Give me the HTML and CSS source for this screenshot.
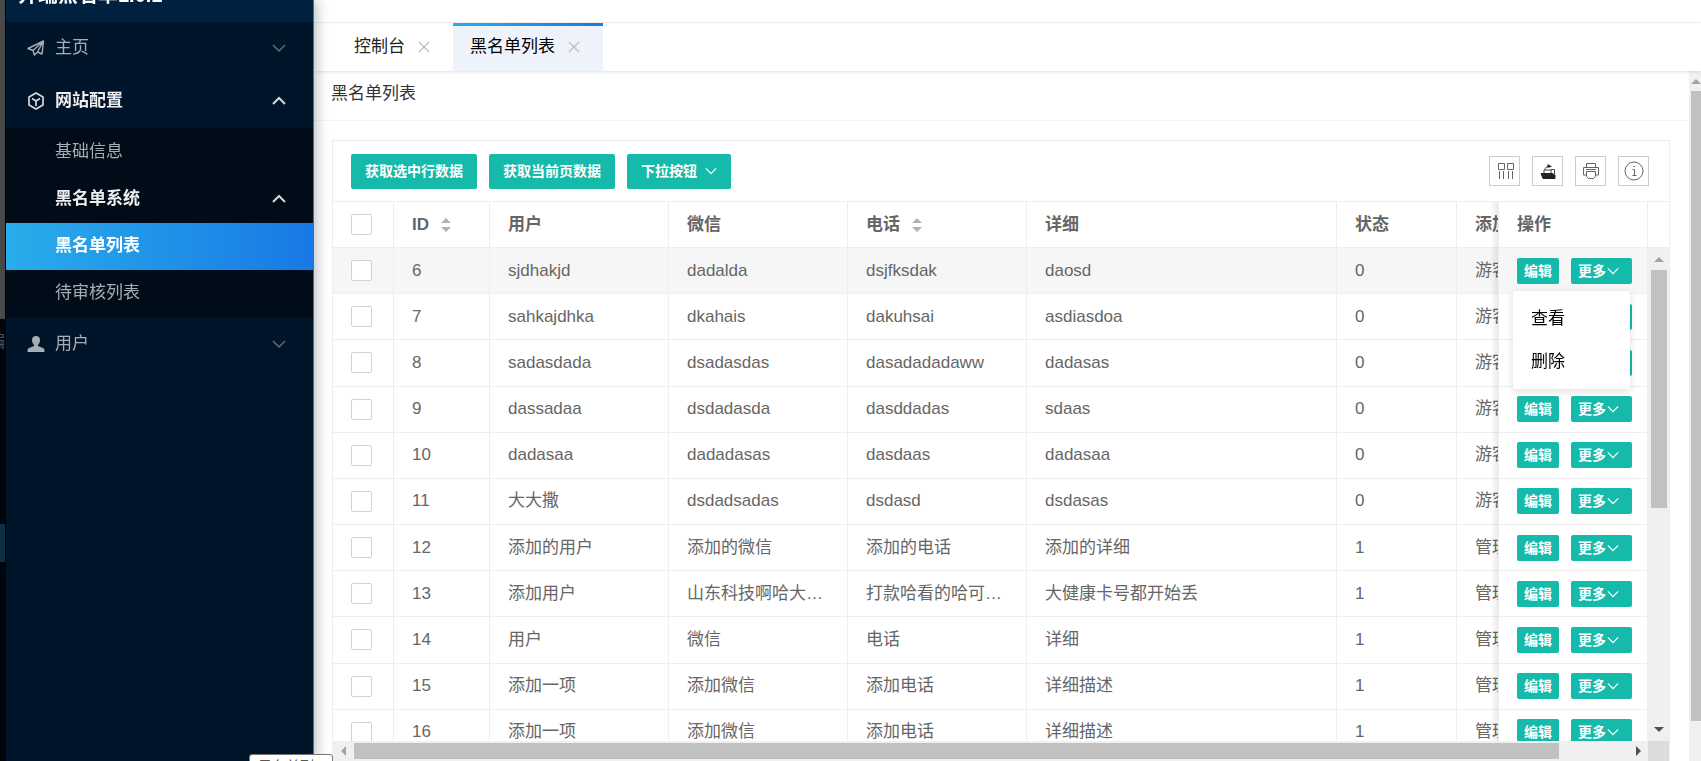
FILE: index.html
```html
<!DOCTYPE html>
<html lang="zh-CN">
<head>
<meta charset="utf-8">
<title>黑名单列表</title>
<link rel="stylesheet" href="styles.css">
</head>
<body>
<svg class="defs" aria-hidden="true">
  <symbol id="down" viewBox="0 0 14 14"><path d="M1 4l6 6 6-6" fill="none" stroke="currentColor" stroke-width="1.4"/></symbol>
  <symbol id="up" viewBox="0 0 14 14"><path d="M1 10l6-6 6 6" fill="none" stroke="currentColor" stroke-width="2"/></symbol>
  <symbol id="close" viewBox="0 0 12 12"><path d="M1 1l10 10M11 1L1 11" fill="none" stroke="currentColor" stroke-width="1.2"/></symbol>
  <symbol id="sort" viewBox="0 0 10 16"><path d="M0 6l5-5 5 5zM0 10h10l-5 5z" fill="currentColor"/></symbol>
</svg>
<div class="app">
  <div class="edge"><div class="edge-top"></div><div class="edge-text">编</div><div class="edge-mark"></div></div>
  <aside class="side">
    <div class="logo">并端黑名单1.0.1</div>
    <nav class="menu">
      <a class="item" href="#">
        <svg class="icon" viewBox="0 0 18 18"><path d="M1 9.500L16.500 2 15 15l-4.500-2L7.500 16 6 11.500zM6 11.500L16.500 2l-6 11" fill="none" stroke="currentColor" stroke-width="1.4" stroke-linejoin="round"/></svg>
        <span>主页</span><svg class="arrow"><use href="#down"/></svg>
      </a>
      <a class="item open" href="#">
        <svg class="icon" viewBox="0 0 18 18"><path d="M9 1l7 4v8l-7 4-7-4V5zM5 6.500l4 2.500 4-2.500M9 9v5" fill="none" stroke="currentColor" stroke-width="1.7" stroke-linejoin="round"/></svg>
        <span>网站配置</span><svg class="arrow"><use href="#up"/></svg>
      </a>
      <div class="sub">
        <a class="item" href="#"><span>基础信息</span></a>
        <a class="item open" href="#"><span>黑名单系统</span><svg class="arrow"><use href="#up"/></svg></a>
        <a class="item active" href="#"><span>黑名单列表</span></a>
        <a class="item" href="#"><span>待审核列表</span></a>
      </div>
      <a class="item" href="#">
        <svg class="icon" viewBox="0 0 18 18"><path d="M9 1c2.500 0 4 1.500 4 4 0 2-1 4-2 5v1l5 2c1 .5 1.500 1 1.500 4H.5c0-3 .5-3.500 1.500-4l5-2v-1C6 9 5 7 5 5c0-2.500 1.500-4 4-4z" fill="currentColor"/></svg>
        <span>用户</span><svg class="arrow"><use href="#down"/></svg>
      </a>
    </nav>
  </aside>
  <div class="main">
    <header class="top"></header>
    <div class="tabs">
      <div class="tab"><a href="#">控制台</a><button class="x" aria-label="关闭控制台"><svg><use href="#close"/></svg></button></div>
      <div class="tab current"><a href="#">黑名单列表</a><button class="x" aria-label="关闭黑名单列表"><svg><use href="#close"/></svg></button></div>
    </div>
    <div class="frame">
      <main class="content">
        <h1 class="title">黑名单列表</h1>
        <section class="card">
          <div class="toolbar">
            <button class="btn">获取选中行数据</button>
            <button class="btn">获取当前页数据</button>
            <button class="btn">下拉按钮<svg><use href="#down"/></svg></button>
            <div class="tools">
              <button class="tool" aria-label="筛选列"><svg viewBox="0 0 18 18"><path d="M2.500 1.500h6v6h-6zM11.500 1.500h6v6h-6zM3.500 9v8M7.500 9v8M12.500 9v8M16.500 9v8" fill="none" stroke="currentColor"/></svg></button>
              <button class="tool" aria-label="导出"><svg viewBox="0 0 18 18"><path d="M2 11.500h11l3 1.500v3.500H4z" fill="#222" stroke="#222"/><path d="M5 11V8h7v3M12 7.500h3.500V14M6 8c0-2 1-3.500 4-3.500" fill="none" stroke="#444"/><path d="M8.500 2l4.500 2.500L8.500 6z" fill="#222"/></svg></button>
              <button class="tool" aria-label="打印"><svg viewBox="0 0 18 18"><path d="M4.500 5V1.500h9V5M4 13H1.500V5.500h15V13H14M4.500 9.500h9v5l-2 2h-5l-2-2z" fill="none" stroke="currentColor"/><path d="M4 7.500h10" stroke="currentColor"/></svg></button>
              <button class="tool" aria-label="提示"><svg class="big" viewBox="0 0 20 20"><circle cx="10" cy="10" r="9" fill="none" stroke="currentColor"/><path d="M8.500 8.500h2V14M8.500 14.500h4M9.500 5.500h1.500" fill="none" stroke="currentColor"/></svg></button>
            </div>
          </div>
          <div class="grid">
            <div class="view">
              <table class="table">
                <colgroup><col class="c-check"><col class="c-id"><col class="c-text"><col class="c-text"><col class="c-text"><col><col class="c-state"><col class="c-text"><col class="c-ops"></colgroup>
                <thead><tr><th><input type="checkbox" aria-label="全选"></th><th>ID<svg class="sort"><use href="#sort"/></svg></th><th>用户</th><th>微信</th><th>电话<svg class="sort"><use href="#sort"/></svg></th><th>详细</th><th>状态</th><th>添加者</th><th class="ops">操作</th></tr></thead>
                <tbody>
                <tr class="hover"><td><input type="checkbox" aria-label="选择 6"></td><td>6</td><td>sjdhakjd</td><td>dadalda</td><td>dsjfksdak</td><td>daosd</td><td>0</td><td>游客</td><td class="ops"><div class="acts"><button class="mini">编辑</button><button class="mini">更多<svg><use href="#down"/></svg></button><div class="drop"><a href="#">查看</a><a href="#">删除</a></div></div></td></tr>
                <tr><td><input type="checkbox" aria-label="选择 7"></td><td>7</td><td>sahkajdhka</td><td>dkahais</td><td>dakuhsai</td><td>asdiasdoa</td><td>0</td><td>游客</td><td class="ops"><div class="acts"><button class="mini">编辑</button><button class="mini">更多<svg><use href="#down"/></svg></button></div></td></tr>
                <tr><td><input type="checkbox" aria-label="选择 8"></td><td>8</td><td>sadasdada</td><td>dsadasdas</td><td>dasadadadaww</td><td>dadasas</td><td>0</td><td>游客</td><td class="ops"><div class="acts"><button class="mini">编辑</button><button class="mini">更多<svg><use href="#down"/></svg></button></div></td></tr>
                <tr><td><input type="checkbox" aria-label="选择 9"></td><td>9</td><td>dassadaa</td><td>dsdadasda</td><td>dasddadas</td><td>sdaas</td><td>0</td><td>游客</td><td class="ops"><div class="acts"><button class="mini">编辑</button><button class="mini">更多<svg><use href="#down"/></svg></button></div></td></tr>
                <tr><td><input type="checkbox" aria-label="选择 10"></td><td>10</td><td>dadasaa</td><td>dadadasas</td><td>dasdaas</td><td>dadasaa</td><td>0</td><td>游客</td><td class="ops"><div class="acts"><button class="mini">编辑</button><button class="mini">更多<svg><use href="#down"/></svg></button></div></td></tr>
                <tr><td><input type="checkbox" aria-label="选择 11"></td><td>11</td><td>大大撒</td><td>dsdadsadas</td><td>dsdasd</td><td>dsdasas</td><td>0</td><td>游客</td><td class="ops"><div class="acts"><button class="mini">编辑</button><button class="mini">更多<svg><use href="#down"/></svg></button></div></td></tr>
                <tr><td><input type="checkbox" aria-label="选择 12"></td><td>12</td><td>添加的用户</td><td>添加的微信</td><td>添加的电话</td><td>添加的详细</td><td>1</td><td>管理员</td><td class="ops"><div class="acts"><button class="mini">编辑</button><button class="mini">更多<svg><use href="#down"/></svg></button></div></td></tr>
                <tr><td><input type="checkbox" aria-label="选择 13"></td><td>13</td><td>添加用户</td><td>山东科技啊哈大学生</td><td>打款哈看的哈可视化</td><td>大健康卡号都开始丢</td><td>1</td><td>管理员</td><td class="ops"><div class="acts"><button class="mini">编辑</button><button class="mini">更多<svg><use href="#down"/></svg></button></div></td></tr>
                <tr><td><input type="checkbox" aria-label="选择 14"></td><td>14</td><td>用户</td><td>微信</td><td>电话</td><td>详细</td><td>1</td><td>管理员</td><td class="ops"><div class="acts"><button class="mini">编辑</button><button class="mini">更多<svg><use href="#down"/></svg></button></div></td></tr>
                <tr><td><input type="checkbox" aria-label="选择 15"></td><td>15</td><td>添加一项</td><td>添加微信</td><td>添加电话</td><td>详细描述</td><td>1</td><td>管理员</td><td class="ops"><div class="acts"><button class="mini">编辑</button><button class="mini">更多<svg><use href="#down"/></svg></button></div></td></tr>
                <tr><td><input type="checkbox" aria-label="选择 16"></td><td>16</td><td>添加一项</td><td>添加微信</td><td>添加电话</td><td>详细描述</td><td>1</td><td>管理员</td><td class="ops"><div class="acts"><button class="mini">编辑</button><button class="mini">更多<svg><use href="#down"/></svg></button></div></td></tr>
                </tbody>
              </table>
            </div>
            <div class="gutter">
              <div class="gutter-head"></div>
              <div class="vbar"><i class="tri up"></i><div class="track"><div class="thumb"></div></div><i class="tri down"></i></div>
            </div>
          </div>
          <div class="hbar"><i class="tri left"></i><div class="track"><div class="thumb"></div></div><i class="tri right"></i><div class="corner"></div></div>
        </section>
      </main>
      <div class="pagebar"><i class="tri up"></i><div class="track"><div class="thumb"></div></div></div>
    </div>
  </div>
  <div class="hint">黑名单列</div>
</div>
</body>
</html>
```
FILE: styles.css
```css
* { box-sizing: border-box; }
body {
  margin: 0;
  background: #fff;
  color: #333;
  font: 17px/24px "Liberation Sans", "Noto Sans CJK SC", sans-serif;
}
a { color: inherit; text-decoration: none; }
button { font: inherit; padding: 0; margin: 0; border: 0; }
.defs { display: none; }
.app { display: flex; height: 100vh; overflow: hidden; position: relative; }

.edge {
  flex: none;
  width: 6px;
  overflow: hidden;
  background: #00060d;
  border-right: 1px solid #000;
  display: flex;
  flex-direction: column;
}
.edge-top { height: 319px; background: #4d4d4d; }
.edge-text { height: 205px; padding-top: 11px; color: #555; direction: rtl; }
.edge-mark { height: 38px; background: #0d3346; }

.side {
  flex: none;
  width: 308px;
  background: #001529;
  color: #a6adb4;
  border-right: 1px solid #5c6b7a;
  box-shadow: 2px 0 12px rgba(0, 21, 41, .3);
  z-index: 2;
}
.logo {
  height: 22px;
  padding-left: 12px;
  display: flex;
  align-items: flex-end;
  background: #002140;
  color: #fff;
  font-size: 20px;
  font-weight: 700;
  line-height: 40px;
  overflow: hidden;
  white-space: nowrap;
  padding-bottom: 7px;
}
.item {
  display: flex;
  align-items: center;
  height: 53px;
  padding: 0 27px 2px 21px;
}
.icon { width: 18px; height: 18px; margin-right: 10px; }
.arrow { width: 14px; height: 14px; margin-left: auto; opacity: .6; }
.open { color: #eee; font-weight: 700; }
.open .arrow { opacity: .9; }
.open .icon { opacity: .9; }
.sub { background: #000c17; padding: 1px 0; }
.sub .item { height: 47px; padding-left: 49px; }
.sub .active {
  color: #fff;
  font-weight: 700;
  background: linear-gradient(to right, #29adeb, #1879e5);
}

.main { flex: 1; min-width: 0; display: flex; flex-direction: column; }
.top { flex: none; height: 23px; border-bottom: 1px solid #f4f4f4; }
.tabs {
  flex: none;
  display: flex;
  height: 48px;
  padding-left: 23px;
  color: #222;
  box-shadow: 0 1px 3px rgba(0, 0, 0, .12);
  z-index: 1;
}
.tab {
  display: flex;
  align-items: center;
  gap: 13px;
  padding: 0 23px 0 17px;
}
.current {
  background: linear-gradient(to right, #29adeb, #1879e5) top / 100% 3px no-repeat #eef3fb;
  color: #000;
}
.x { width: 12px; height: 12px; background: none; color: #bbb; line-height: 0; }
.x svg { width: 12px; height: 12px; }

.frame { flex: 1; min-height: 0; display: flex; }
.content { flex: 1; min-width: 0; display: flex; flex-direction: column; }
.title {
  flex: none;
  margin: 0;
  height: 50px;
  padding: 11px 17px;
  font-size: 17px;
  font-weight: 400;
  border-bottom: 1px solid #f4f4f4;
}
.card {
  flex: 1;
  min-height: 0;
  display: flex;
  flex-direction: column;
  margin: 19px 19px 0 18px;
  border: 1px solid #eee;
  border-bottom: 0;
}
.toolbar {
  flex: none;
  display: flex;
  align-items: center;
  gap: 12px;
  height: 61px;
  padding: 0 20px 0 18px;
  border-bottom: 1px solid #eee;
}
.btn, .mini {
  display: inline-flex;
  align-items: center;
  background: #16baaa;
  color: #fff;
  font-size: 14px;
  font-weight: 700;
  border-radius: 2px;
  white-space: nowrap;
}
.btn { height: 35px; padding: 0 14px; }
.btn svg { width: 12px; height: 12px; margin-left: 8px; }
.tools { margin-left: auto; display: flex; gap: 12px; }
.tool {
  width: 31px;
  height: 30px;
  display: flex;
  align-items: center;
  justify-content: center;
  border: 1px solid #ccc;
  background: #fff;
  color: #666;
}
.tool svg { width: 18px; height: 18px; }
.tool .big { width: 20px; height: 20px; }

.grid { flex: 1; min-height: 0; display: flex; }
.view { flex: 1; min-width: 0; overflow: hidden; }
.table {
  table-layout: fixed;
  width: calc(100% + 138px);
  height: 554px;
  border-collapse: separate;
  border-spacing: 0;
  color: #666;
}
.c-check { width: 61px; }
.c-id { width: 96px; }
.c-text { width: 179px; }
.c-state { width: 120px; }
.c-ops { width: 150px; }
th, td {
  height: 46px;
  padding: 0 18px;
  text-align: left;
  font-weight: 400;
  white-space: nowrap;
  overflow: hidden;
  text-overflow: ellipsis;
  border-right: 1px solid #eee;
  border-bottom: 1px solid #eee;
}
th { font-weight: 700; color: #666; }
.hover td { background: #f6f6f6; }
.sort { width: 10px; height: 16px; margin-left: 12px; color: #b2b2b2; vertical-align: -3px; }
input[type="checkbox"] {
  appearance: none;
  display: block;
  width: 21px;
  height: 21px;
  margin: 0;
  background: #fff;
  border: 1px solid #d2d2d2;
  border-radius: 2px;
}
.ops { position: sticky; right: 0; background: #fff; overflow: visible; z-index: 1; border-left: 1px solid #eee; }
.ops::before {
  content: "";
  position: absolute;
  top: 0;
  bottom: -1px;
  left: -9px;
  width: 8px;
  background: linear-gradient(to left, rgba(0, 0, 0, .08), transparent);
}
.hover .ops { z-index: 2; }
.acts { display: flex; gap: 12px; position: relative; }
.mini { height: 26px; padding: 0 7px; }
.mini svg { width: 12px; height: 12px; margin: 0 6px 0 1px; }
.drop {
  position: absolute;
  top: 33px;
  left: -4px;
  width: 117px;
  padding: 6px 0;
  background: #fff;
  color: #000;
  border-radius: 2px;
  box-shadow: 0 2px 8px rgba(0, 0, 0, .14);
}
.drop a { display: block; padding: 0 18px; line-height: 43px; }

.track { flex: 1; min-height: 0; min-width: 0; }
.thumb { background: #c1c1c1; }
.tri { flex: none; width: 0; height: 0; border: 5px solid transparent; }
.tri.up { border-top: 0; border-bottom-color: #a3a3a3; }
.tri.down { border-bottom: 0; border-top-color: #505050; }
.tri.left { border-left: 0; border-right-color: #a3a3a3; }
.tri.right { border-right: 0; border-left-color: #505050; }
.gutter { flex: none; width: 21px; display: flex; flex-direction: column; }
.gutter-head { height: 46px; border-bottom: 1px solid #eee; }
.vbar {
  flex: 1;
  min-height: 0;
  display: flex;
  flex-direction: column;
  align-items: center;
  gap: 8px;
  padding: 9px 0;
  background: #f0f0f0;
}
.vbar .thumb { width: 16px; height: 53%; }
.hbar {
  flex: none;
  display: flex;
  align-items: center;
  height: 20px;
  padding-left: 8px;
  background: #f0f0f0;
}
.hbar .track { margin-left: 8px; }
.hbar .thumb { width: 94%; height: 16px; }
.corner { width: 21px; height: 20px; margin-left: 7px; background: #dcdcdc; }
.pagebar {
  flex: none;
  width: 12px;
  display: flex;
  flex-direction: column;
  align-items: flex-end;
  gap: 7px;
  padding-top: 8px;
  background: #f0f0f0;
  overflow: hidden;
}
.pagebar .track { width: 10px; }
.pagebar .thumb { height: 94%; }

.hint {
  position: absolute;
  left: 249px;
  top: calc(100% - 7px);
  width: 84px;
  height: 24px;
  padding: 1px 8px;
  border: 1px solid #767676;
  border-radius: 3px;
  background: #fff;
  color: #575757;
  font-size: 14px;
  line-height: 20px;
  z-index: 3;
}
```
